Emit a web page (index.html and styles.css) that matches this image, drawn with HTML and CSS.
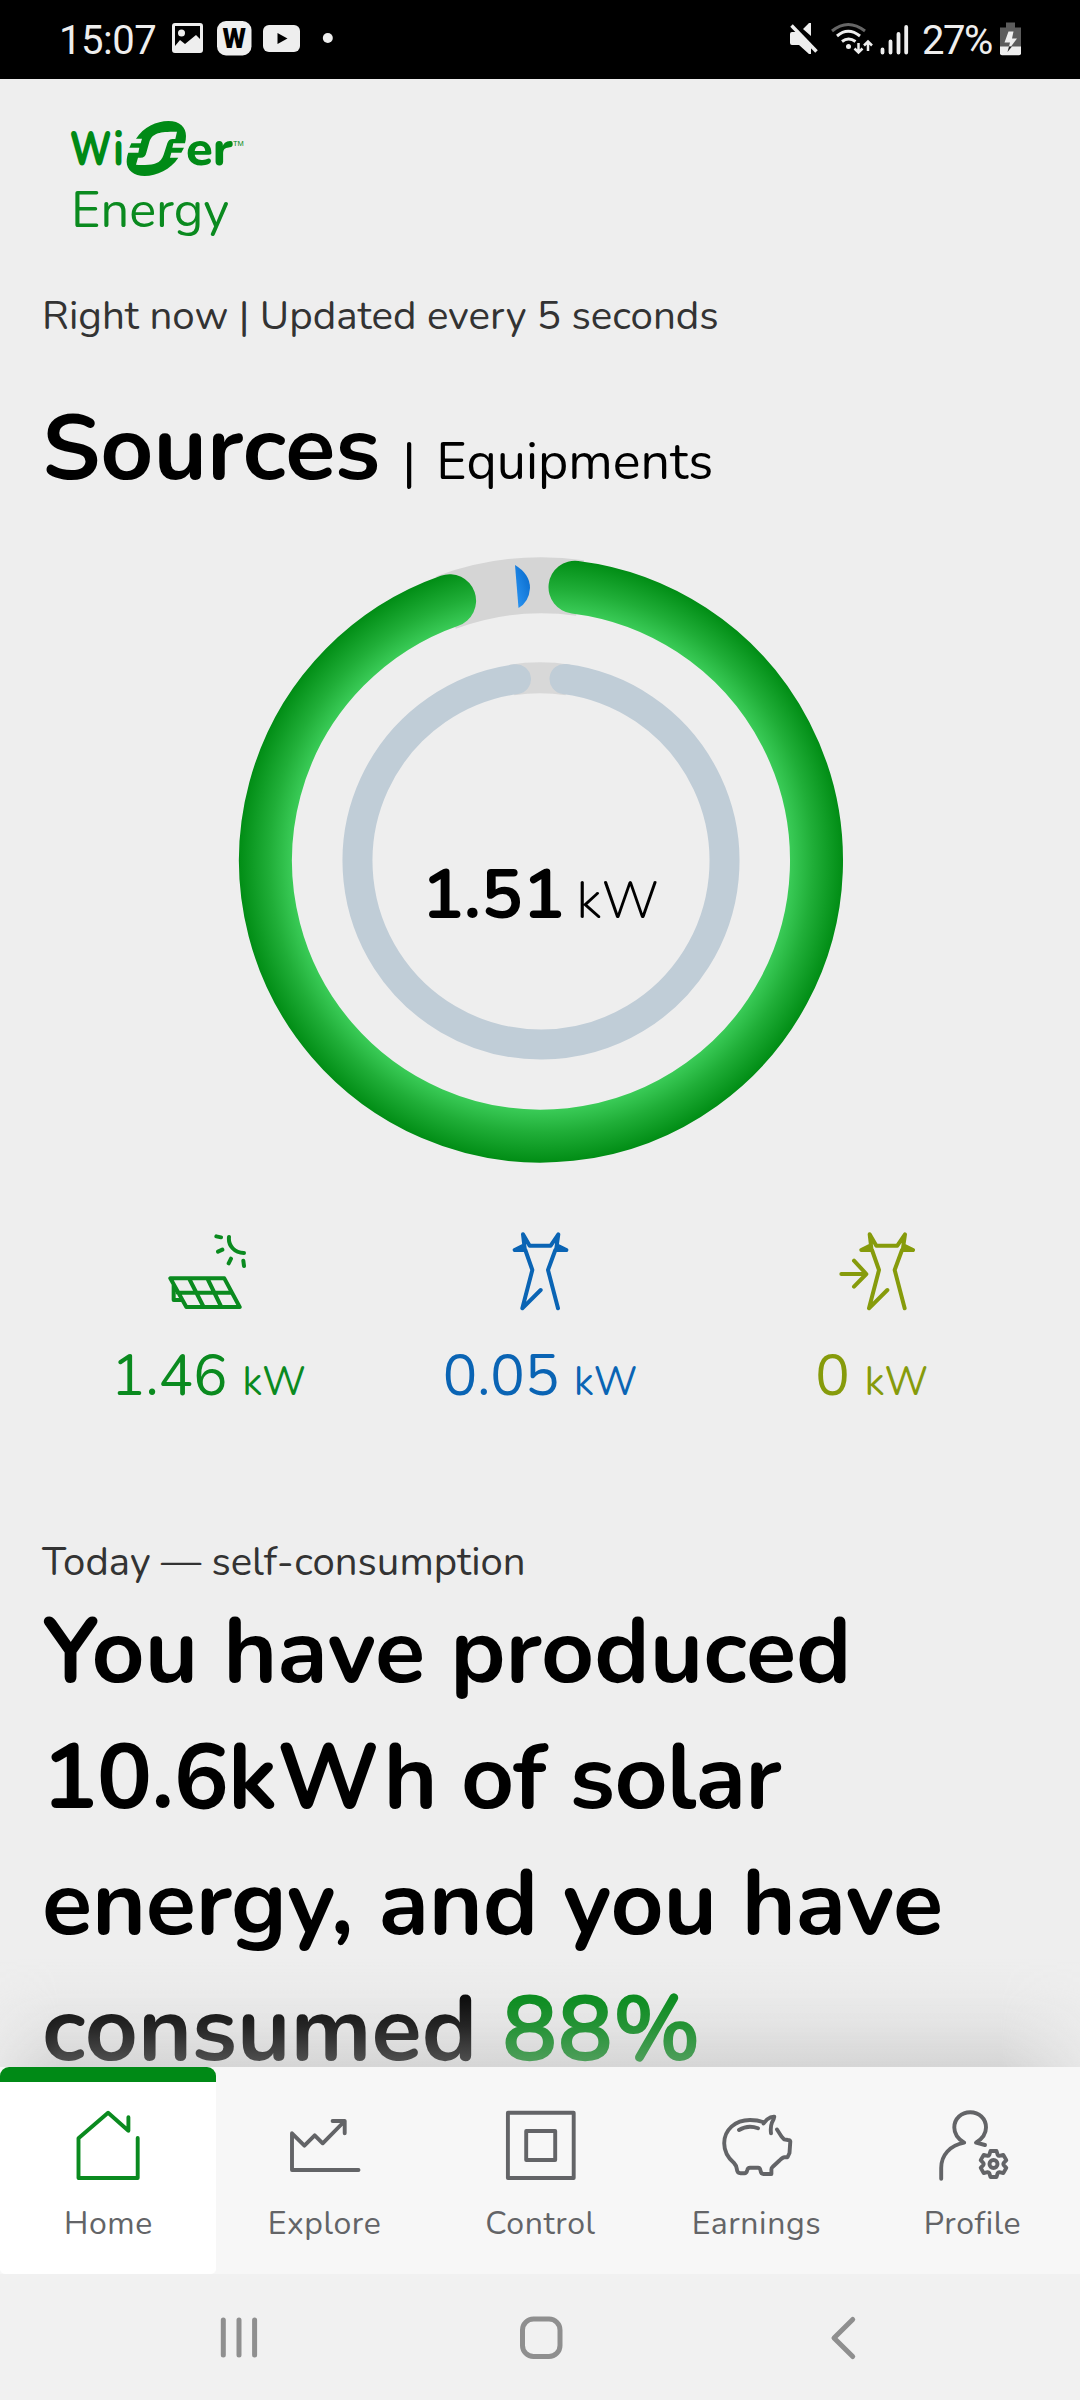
FILE: index.html
```html
<!DOCTYPE html>
<html lang="en">
<head>
<meta charset="utf-8">
<title>Wiser Energy</title>
<link rel="stylesheet" href="styles.css">
</head>
<body>
<div class="phone">
  <header class="status">
    <span class="clock">15:07</span>
    <svg class="status-apps" width="170" height="40" viewBox="170 18 170 40">
      <path fill="#eee" fill-rule="evenodd" d="M175 23h25a3 3 0 0 1 3 3v24a3 3 0 0 1-3 3h-25a3 3 0 0 1-3-3V26a3 3 0 0 1 3-3zM175 26v20l5-6 5 4 11-9 4 4V26z"/>
      <circle cx="181.500" cy="33" r="3.500" fill="#eee"/>
      <rect x="217" y="21" width="34.500" height="34.500" rx="9" fill="#eee"/>
      <text class="app-letter" x="234.300" y="47.500">W</text>
      <rect x="263" y="25" width="37" height="27" rx="6" fill="#eee"/>
      <path d="M277.500 33v11l10-5.500z" fill="#000"/>
      <circle cx="327.800" cy="38" r="5" fill="#eee"/>
    </svg>
    <svg class="status-signal" width="122" height="40" viewBox="788 18 122 40">
      <path fill="#eee" d="M790 34q0-2 2-2h5l14 14v8h-2l-10-9h-7q-2 0-2-2zM803 29l6-6h2v13z"/>
      <path d="M791.500 25.500l25 26" stroke="#eee" stroke-width="3.500"/>
      <g fill="none" stroke="#eee" stroke-width="3">
        <path stroke="#666" d="M832 31q16-13 33 0"/>
        <path d="M837 36q11-9.500 23 0M842 41.500q6.500-5 13.500 0"/>
        <path stroke-width="2.500" d="M858.500 43v9M854.500 48.500l4 4 4-4M868 51v-9M864 45.500l4-4 4 4"/>
        <path stroke-width="3.800" stroke-linecap="round" d="M882.500 49.500v3M890.500 41.500v11M898.500 34v18.500M906.200 27v25.500"/>
      </g>
      <circle cx="848.500" cy="46.500" r="2.500" fill="#eee"/>
    </svg>
    <span class="percent">27%</span>
    <svg class="battery" width="22" height="34" viewBox="1000 21.500 22 34">
      <path fill="#5c5c5c" d="M1006 22h9v5h6v20h-21V27h6z"/>
      <path fill="#eee" d="M1000 46h21v7q0 1.700-2 1.700h-17q-2 0-2-1.700z"/>
      <path fill="#eee" d="M1008.500 31h5l-1.500 7h5l-6 8h-2l1-4h-5.500z"/>
      <path fill="#222" d="M1012 46l-4.500 5.500 1.500-5.500z"/>
    </svg>
  </header>

  <main class="content">
    <div class="brand">
      <svg width="200" height="70" viewBox="0 0 200 70">
        <g class="brand-word">
          <text x="9.500" y="54.500" textLength="54" lengthAdjust="spacingAndGlyphs">Wi</text>
          <text x="126" y="54.500" textLength="47" lengthAdjust="spacingAndGlyphs">er</text>
        </g>
        <text class="brand-tm" x="173" y="35.500">TM</text>
        <g transform="scale(.3333)">
          <path fill="#008a16" d="M228 86C250 52 290 33 325 33C360 33 378 52 378 78C378 86 377 93 375 100H340L337 113H372L364 128H334L330 143H355C332 178 290 198 254 198C222 198 200 180 200 155C200 145 202 136 205 128H235L238 113H208L214 100H242L246 86Z"/>
          <path fill="#eee" d="M351 65C320 65 306 66 294 70C278 76 272 84 268 96L259 128Q256 143 242 143H234L228 164C262 166 276 165 288 160C300 155 307 146 311 134L322 100Q326 87 338 87H346Z"/>
        </g>
      </svg>
      <span class="brand-sub">Energy</span>
    </div>

    <p class="caption">Right now | Updated every 5 seconds</p>
    <div class="tabs"><h1>Sources</h1><span class="tab-rule">|</span><span class="tab">Equipments</span></div>

    <svg class="gauge" width="640" height="640" viewBox="220 540 640 640">
      <defs>
        <radialGradient id="solar" gradientUnits="userSpaceOnUse" cx="541" cy="860.500" r="302">
          <stop offset=".825" stop-color="#3acb57"/><stop offset=".9" stop-color="#20ae38"/><stop offset="1" stop-color="#018d15"/>
        </radialGradient>
        <linearGradient id="grid" x1="0" y1="1" x2="1" y2="0"><stop offset="0" stop-color="#2d97f5"/><stop offset="1" stop-color="#0567c8"/></linearGradient>
      </defs>
      <g fill="none">
        <path stroke="#d5d5d5" stroke-width="56" d="M446 602.500A275 275 0 0 1 580 588"/>
        <path stroke="url(#solar)" stroke-width="53" stroke-linecap="round" d="M575 587.200A275.500 275.500 0 1 1 449.600 600.700"/>
        <path stroke="#d8d8d8" stroke-width="31" d="M512 680A183.500 183.500 0 0 1 568 680"/>
        <path stroke="#c0cdd7" stroke-width="30" stroke-linecap="round" d="M564.500 679A183.500 183.500 0 1 1 516 679.200"/>
      </g>
      <path fill="url(#grid)" d="M515 565Q530 574 530 588Q529 602 518.500 608Z"/>
      <text class="total" x="422" y="918">1.51</text>
      <text class="total-unit" x="576.500" y="918">kW</text>
    </svg>

    <section class="sources">
      <div class="source solar">
        <svg width="100" height="95" viewBox="4 0 300 285">
          <path d="M35 160H197L243 246H83ZM57 203H218M92 162L135 246M147 162L188 246M45 180V225H68M211 36C208 62 228 84 256 84M173 34L187 37M178 80L191 74M210 115L217 101M254 107L256 123"/>
        </svg>
        <p>1.46 <small>kW</small></p>
      </div>
      <div class="source import">
        <svg width="100" height="95" viewBox="26 0 300 285">
          <path d="M97 75L124 62M97 75H129L150 135L120 250L175 195M127 70L122 28L142 62H205L228 28L222 70M252 75L226 62M252 75H219L197 135L227 250"/>
        </svg>
        <p>0.05 <small>kW</small></p>
      </div>
      <div class="source export">
        <svg width="100" height="95" viewBox="-18 0 300 285">
          <path d="M97 75L124 62M97 75H129L150 135L120 250L175 195M127 70L122 28L142 62H205L228 28L222 70M252 75L226 62M252 75H219L197 135L227 250M37 147H110M75 107L112 147L75 185"/>
        </svg>
        <p>0 <small>kW</small></p>
      </div>
    </section>

    <p class="caption today">Today — self-consumption</p>
    <h2 class="summary">You have produced<br><span class="tight">10.6kWh of solar</span><br><span class="snug">energy, and you have</span><br>consumed <em>88%</em></h2>
    <div class="fade"></div>
  </main>

  <nav class="nav">
    <div class="item active">
      <svg width="80" height="80" viewBox="0 0 80 80"><path d="M60.400 10.300V23.700L40.100 5.700 10.500 31.300V71H69.700V31"/></svg>
      <span>Home</span>
    </div>
    <div class="item">
      <svg width="80" height="80" viewBox="0 0 80 80"><path d="M74.500 63H8V26.300L20.400 38.700 30.700 28.300 38.700 36.300 60.700 14M48.600 14H60.700V26.300"/></svg>
      <span>Explore</span>
    </div>
    <div class="item">
      <svg width="80" height="80" viewBox="0 0 80 80"><path d="M7.900 5.700H73.700V71H7.900ZM26.200 24H55.200V53H26.200Z"/></svg>
      <span>Control</span>
    </div>
    <div class="item">
      <svg width="80" height="80" viewBox="0 0 80 80"><path d="M47 15C43 13.500 38 13 34 13C19 13 8.200 23 8.200 36.300C8.200 45 12 51 18 56C20.500 58.500 20.500 60 21 63Q21.500 66.300 24.500 66.300H28.500Q30.500 66.300 31.300 63Q31.800 60.700 34 60.700H42Q44 60.700 44.500 63.500Q45 67 47.500 67H55.400V63Q55.200 61 56.500 60L63.500 53.500Q66.500 50.300 68.500 50.300H71.500L73.500 46L74.300 34.500Q74 33 72 33L68 32.300L65.500 29.500L61 22.500M47.500 16.500L51 12.500Q55 9.500 58.300 9.800Q58 12 56 15.500C54.500 19 54.500 22 55 26.300M23 23Q32 17.500 42 21.300"/></svg>
      <span>Earnings</span>
    </div>
    <div class="item">
      <svg width="80" height="80" viewBox="0 0 80 80">
        <path d="M9.200 71.700V61C9.200 48 18 38.500 32.200 35.700C26 32 22.300 27 22.300 20.500C22.300 11.500 29.500 5.300 38.200 5.300C47 5.300 54 11.500 54 20.500C54 27 50 32 44 35.700L53 38"/>
        <path transform="translate(61.500 57)" d="M-4.200-9.200L-3-13H3L4.200-9.200Q5-8 5.900-8.200L9.800-9.100 12.800-3.900 10.100-1Q9.500 0 10.100 1L12.800 3.900 9.800 9.100 5.900 8.200Q5 8 4.200 9.200L3 13H-3L-4.200 9.200Q-5 8-5.900 8.200L-9.800 9.100-12.800 3.900-10.100 1Q-9.500 0-10.100-1L-12.800-3.900-9.800-9.100-5.900-8.200Q-5-8-4.200-9.200Z"/>
        <circle cx="61.500" cy="57" r="4"/>
      </svg>
      <span>Profile</span>
    </div>
  </nav>

  <footer class="system">
    <svg width="60" height="60" viewBox="0 0 60 60"><path d="M14.300 13v35M30 13v35M45.600 13v35"/></svg>
    <svg width="60" height="60" viewBox="0 0 60 60"><rect x="11.500" y="12" width="37.500" height="37.500" rx="11"/></svg>
    <svg width="60" height="60" viewBox="0 0 60 60"><path d="M39.700 12.500L21 31 39.700 49.500"/></svg>
  </footer>
</div>
</body>
</html>
```
FILE: styles.css
```css
* { box-sizing: border-box; margin: 0; padding: 0; }
body { background: #eee; font-family: Nunito, Lato, "Noto Sans", sans-serif; color: #000; }
svg { display: block; flex: none; }
.phone { width: 1080px; height: 2400px; display: flex; flex-direction: column; overflow: hidden; }

.status { height: 79px; flex: none; background: #000; color: #eee; display: flex; align-items: flex-start; padding: 18px 58px 0 59px; font: 40px/46px Roboto, sans-serif; }
.clock { width: 111px; letter-spacing: -.5px; }
.status-apps { margin-right: 448px; }
.app-letter { font: 900 27px Roboto, sans-serif; text-anchor: middle; fill: #000; }
.percent { width: 78px; margin-left: 12px; letter-spacing: -1.5px; white-space: nowrap; }
.battery { margin: 3.500px 0 0 0; }

.content { height: 1988px; flex: none; position: relative; overflow: hidden; }
.brand { padding: 31px 60px 0; height: 210px; color: #0a8a1f; }
.brand-word { font-weight: 800; font-size: 48px; fill: #008a16; }
.brand-tm { font: 7.500px "Liberation Sans", sans-serif; fill: #008a16; }
.brand-sub { display: block; padding-left: 11px; font-size: 50.500px; line-height: 62px; }
.caption { padding-left: 42px; font-size: 40.350px; line-height: 54px; color: #333; }
.tabs { display: flex; align-items: baseline; padding-left: 42px; margin-top: 43px; height: 126px; line-height: 126px; }
.tabs h1 { font-size: 92.400px; font-weight: 700; }
.tab-rule, .tab { font-size: 52px; }
.tab-rule { margin-left: 22px; width: 34px; }
.gauge { margin: 28px 0 0 220px; }
.total { font-size: 69.500px; font-weight: 700; }
.total-unit { font-size: 52px; font-weight: 350; }

.sources { display: grid; grid-template-columns: repeat(3, 1fr); padding: 45px 41px 0 44px; height: 355px; }
.source { display: flex; flex-direction: column; align-items: center; color: #0a8a1f; }
.source path { fill: none; stroke: currentColor; stroke-width: 12; stroke-linecap: round; stroke-linejoin: round; }
.source p { margin: 21px 3px 0 0; font-size: 57.500px; line-height: 70px; white-space: nowrap; }
.source small { font-size: 39.500px; }
.import { color: #0a64b4; }
.export { color: #869b0b; }

.today { line-height: 54px; font-size: 40.150px; }
.summary { padding-left: 42px; font-size: 92.400px; line-height: 126px; font-weight: 700; white-space: nowrap; }
.summary em { font-style: normal; color: #008a16; }
.tight { letter-spacing: -.78px; }
.snug { letter-spacing: -.15px; }
.fade { position: absolute; left: 0; right: 0; bottom: 0; height: 110px; background: linear-gradient(rgba(185,185,185,0), rgba(185,185,185,.04) 30%, rgba(185,185,185,.2) 63%, rgba(185,185,185,.46)); -webkit-mask-image: linear-gradient(90deg, rgba(0,0,0,.3), #000 60px, #000 1000px, rgba(0,0,0,.3)); mask-image: linear-gradient(90deg, rgba(0,0,0,.3), #000 60px, #000 1000px, rgba(0,0,0,.3)); }

.nav { height: 207px; flex: none; display: grid; grid-template-columns: repeat(5, 1fr); background: #f7f7f7; color: #636467; }
.item { display: flex; flex-direction: column; align-items: center; padding-top: 40px; }
.item svg { fill: none; stroke: #636467; stroke-width: 3.900; stroke-linecap: round; stroke-linejoin: round; }
.item span { margin: 15px 0 0 1px; font-size: 32px; line-height: 44px; letter-spacing: .6px; }
.active { background: #fff; border-top: 15px solid #008a16; border-radius: 9px 9px 5px 5px; padding-top: 25px; }
.active svg { stroke: #0a8a1f; }

.system { height: 126px; flex: none; background: #f1f1f1; display: flex; justify-content: space-between; padding: 33px 207px 0 209px; }
.system svg { fill: none; stroke: #8f8f8f; stroke-width: 5; stroke-linecap: round; stroke-linejoin: round; }
```
